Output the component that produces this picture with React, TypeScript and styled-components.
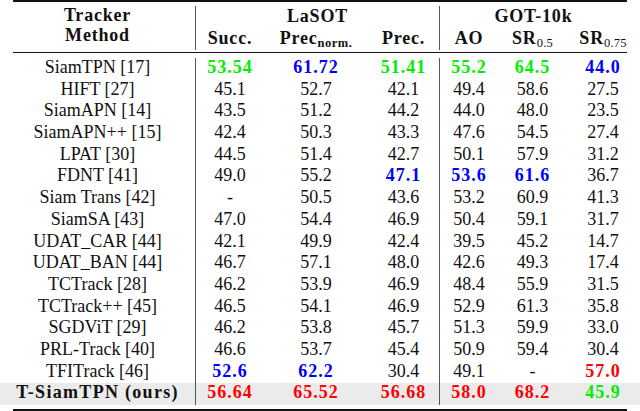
import React from "react";
import styled, { createGlobalStyle } from "styled-components";

const GlobalStyle = createGlobalStyle`
  html, body { margin: 0; padding: 0; background: #ffffff; }
  body { font-family: "Liberation Serif", "Times New Roman", serif; color: #111; }
`;

const COLS = "195px 69px 104px 71px 59px 69px 73px";

type Tone = "green" | "blue" | "red" | undefined;
const toneColor: Record<string, string> = {
  green: "#00ee00",
  blue: "#0000ff",
  red: "#ff0000",
};

const Page = styled.div`
  width: 640px;
  height: 411px;
  overflow: hidden;
  display: flex;
  flex-direction: column;
  font-family: "Liberation Serif", "Times New Roman", serif;
  font-size: 18px;
`;

const Rule = styled.div<{ $thick?: boolean }>`
  margin: 0 13px;
  height: ${(p) => (p.$thick ? "2px" : "1px")};
  background: #111;
  flex: none;
`;

const HeaderGrid = styled.div`
  display: grid;
  grid-template-columns: ${COLS};
  grid-template-rows: 22px 22px;
  padding: 4px 0 2px;
  font-weight: bold;
  letter-spacing: 0.8px;
`;

const MethodHead = styled.div`
  grid-column: 1;
  grid-row: 1 / 3;
  display: flex;
  flex-direction: column;
  align-items: center;
  margin-top: -1px;
`;

const HeadLine = styled.span`
  display: block;
  height: 20px;
  line-height: 20px;
  white-space: nowrap;
`;

const GroupHead = styled.div<{ $col: string; $padRight?: number }>`
  grid-column: ${(p) => p.$col};
  grid-row: 1;
  text-align: center;
  line-height: 21px;
  border-left: 1px solid #555;
  padding-right: ${(p) => p.$padRight ?? 0}px;
`;

const SubHead = styled.div<{ $divider?: boolean; $padLeft?: number; $padRight?: number }>`
  grid-row: 2;
  text-align: center;
  line-height: 21px;
  white-space: nowrap;
  border-left: ${(p) => (p.$divider ? "1px solid #555" : "none")};
  padding-left: ${(p) => p.$padLeft ?? 0}px;
  padding-right: ${(p) => p.$padRight ?? 0}px;
`;

const Sub = styled.sub<{ $regular?: boolean }>`
  font-size: 12.5px;
  line-height: 0;
  vertical-align: -3px;
  font-weight: ${(p) => (p.$regular ? "normal" : "bold")};
  letter-spacing: ${(p) => (p.$regular ? "0.2px" : "0.5px")};
`;

const Body = styled.div`
  display: flex;
  flex-direction: column;
  padding: 5px 0 4px;
`;

const Row = styled.div<{ $highlight?: boolean }>`
  display: grid;
  grid-template-columns: ${COLS};
  height: 21.69px;
  background: ${(p) => (p.$highlight ? "#ebebeb" : "transparent")};
  font-weight: ${(p) => (p.$highlight ? "bold" : "normal")};
  letter-spacing: ${(p) => (p.$highlight ? "1.3px" : "0")};
`;

const NameCell = styled.div`
  text-align: center;
  line-height: 18.7px;
  white-space: nowrap;
`;

const ValueCell = styled.div<{ $tone?: Tone; $divider?: boolean; $padLeft?: number; $padRight?: number }>`
  text-align: center;
  line-height: 18.7px;
  white-space: nowrap;
  color: ${(p) => (p.$tone ? toneColor[p.$tone] : "#111")};
  font-weight: ${(p) => (p.$tone ? "bold" : "inherit")};
  letter-spacing: ${(p) => (p.$tone ? "1px" : "inherit")};
  border-left: ${(p) => (p.$divider ? "1px solid #555" : "none")};
  padding-left: ${(p) => p.$padLeft ?? 0}px;
  padding-right: ${(p) => p.$padRight ?? 0}px;
`;

type Val = [string, Tone?];
type RowData = { name: string; vals: Val[]; ours?: boolean };

const rows: RowData[] = [
  { name: "SiamTPN [17]", vals: [["53.54", "green"], ["61.72", "blue"], ["51.41", "green"], ["55.2", "green"], ["64.5", "green"], ["44.0", "blue"]] },
  { name: "HIFT [27]", vals: [["45.1"], ["52.7"], ["42.1"], ["49.4"], ["58.6"], ["27.5"]] },
  { name: "SiamAPN [14]", vals: [["43.5"], ["51.2"], ["44.2"], ["44.0"], ["48.0"], ["23.5"]] },
  { name: "SiamAPN++ [15]", vals: [["42.4"], ["50.3"], ["43.3"], ["47.6"], ["54.5"], ["27.4"]] },
  { name: "LPAT [30]", vals: [["44.5"], ["51.4"], ["42.7"], ["50.1"], ["57.9"], ["31.2"]] },
  { name: "FDNT [41]", vals: [["49.0"], ["55.2"], ["47.1", "blue"], ["53.6", "blue"], ["61.6", "blue"], ["36.7"]] },
  { name: "Siam Trans [42]", vals: [["-"], ["50.5"], ["43.6"], ["53.2"], ["60.9"], ["41.3"]] },
  { name: "SiamSA [43]", vals: [["47.0"], ["54.4"], ["46.9"], ["50.4"], ["59.1"], ["31.7"]] },
  { name: "UDAT_CAR [44]", vals: [["42.1"], ["49.9"], ["42.4"], ["39.5"], ["45.2"], ["14.7"]] },
  { name: "UDAT_BAN [44]", vals: [["46.7"], ["57.1"], ["48.0"], ["42.6"], ["49.3"], ["17.4"]] },
  { name: "TCTrack [28]", vals: [["46.2"], ["53.9"], ["46.9"], ["48.4"], ["55.9"], ["31.5"]] },
  { name: "TCTrack++ [45]", vals: [["46.5"], ["54.1"], ["46.9"], ["52.9"], ["61.3"], ["35.8"]] },
  { name: "SGDViT [29]", vals: [["46.2"], ["53.8"], ["45.7"], ["51.3"], ["59.9"], ["33.0"]] },
  { name: "PRL-Track [40]", vals: [["46.6"], ["53.7"], ["45.4"], ["50.9"], ["59.4"], ["30.4"]] },
  { name: "TFITrack [46]", vals: [["52.6", "blue"], ["62.2", "blue"], ["30.4"], ["49.1"], ["-"], ["57.0", "red"]] },
  { name: "T-SiamTPN (ours)", ours: true, vals: [["56.64", "red"], ["65.52", "red"], ["56.68", "red"], ["58.0", "red"], ["68.2", "red"], ["45.9", "green"]] },
];

const cellPad = (i: number) => ({
  divider: i === 0 || i === 3,
  padLeft: i === 5 ? 12 : 0,
  padRight: i === 5 ? 13 : 0,
});

export default function App() {
  return (
    <>
      <GlobalStyle />
      <Page>
        <Rule $thick />
        <HeaderGrid>
          <MethodHead>
            <HeadLine>Tracker</HeadLine>
            <HeadLine>Method</HeadLine>
          </MethodHead>
          <GroupHead $col="2 / 5">LaSOT</GroupHead>
          <GroupHead $col="5 / 8" $padRight={13}>GOT-10k</GroupHead>
          <SubHead $divider>Succ.</SubHead>
          <SubHead>
            Prec<Sub>norm.</Sub>
          </SubHead>
          <SubHead>Prec.</SubHead>
          <SubHead $divider>AO</SubHead>
          <SubHead>
            SR<Sub $regular>0.5</Sub>
          </SubHead>
          <SubHead $padLeft={12} $padRight={13}>
            SR<Sub $regular>0.75</Sub>
          </SubHead>
        </HeaderGrid>
        <Rule />
        <Body>
          {rows.map((r) => (
            <Row key={r.name} $highlight={r.ours}>
              <NameCell>{r.name}</NameCell>
              {r.vals.map(([v, tone], i) => {
                const c = cellPad(i);
                return (
                  <ValueCell
                    key={i}
                    $tone={tone}
                    $divider={c.divider}
                    $padLeft={c.padLeft}
                    $padRight={c.padRight}
                  >
                    {v}
                  </ValueCell>
                );
              })}
            </Row>
          ))}
        </Body>
        <Rule $thick />
      </Page>
    </>
  );
}
